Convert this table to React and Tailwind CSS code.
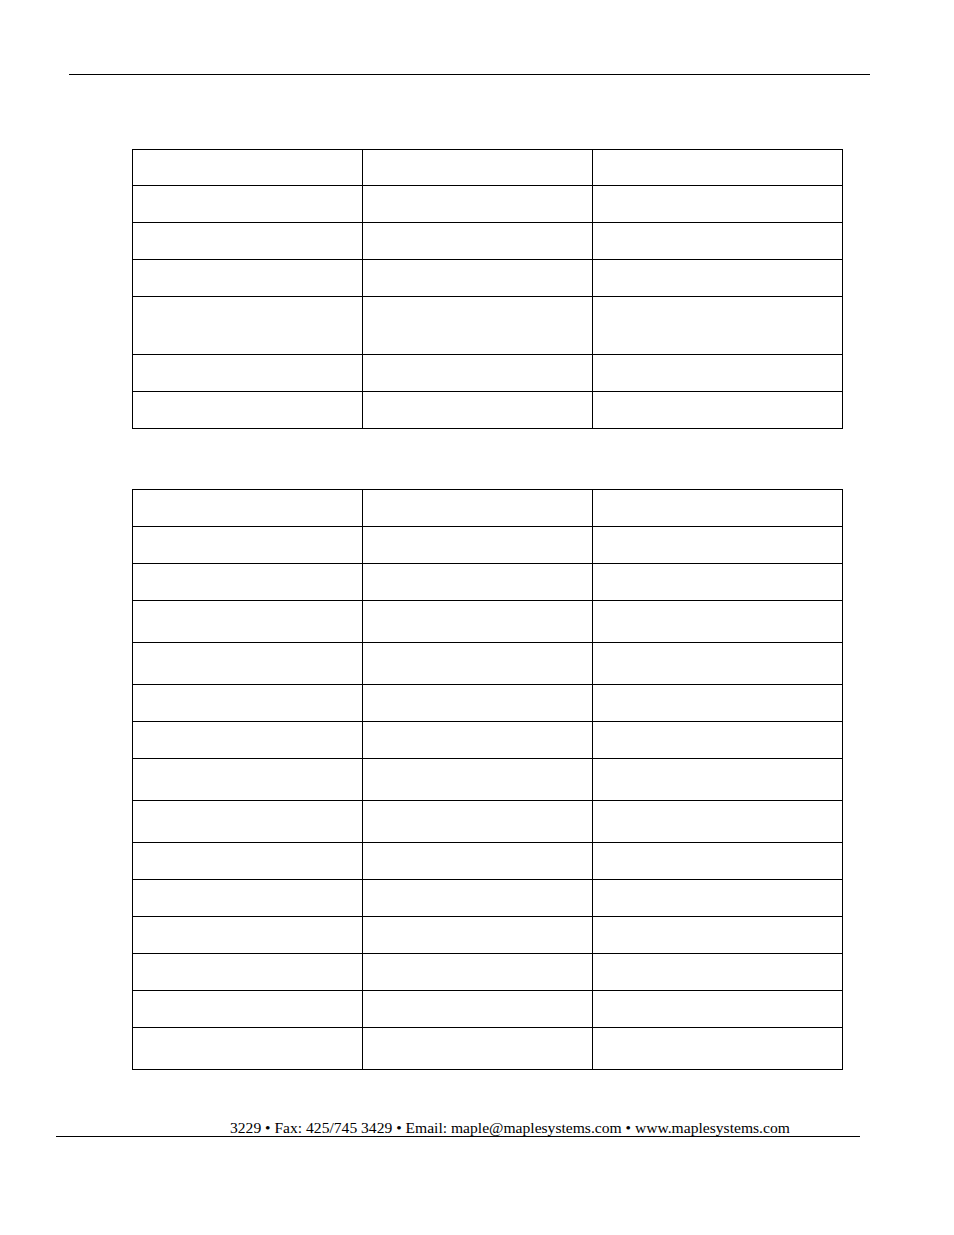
import React from "react";

const tableOne = [36, 37, 37, 37, 58, 37, 37];
const tableTwo = [37, 37, 37, 42, 42, 37, 37, 42, 42, 37, 37, 37, 37, 37, 42];

const BlankTable = ({ rows }) => (
  <div className="ml-[132px] w-[711px] border-l border-t border-black">
    {rows.map((h, i) => (
      <div key={i} className="grid grid-cols-[230px_230px_250px]" style={{ height: h }}>
        <div className="border-r border-b border-black" />
        <div className="border-r border-b border-black" />
        <div className="border-r border-b border-black" />
      </div>
    ))}
  </div>
);

export default function App() {
  return (
    <div className="w-[954px] h-[1235px] bg-white" style={{ fontFamily: '"Liberation Serif", serif' }}>
      <div className="pt-[74px]">
        <div className="ml-[69px] w-[801px] h-px bg-black" />
      </div>
      <div className="mt-[74px]">
        <BlankTable rows={tableOne} />
      </div>
      <div className="mt-[60px]">
        <BlankTable rows={tableTwo} />
      </div>
      <div className="mt-[49px] ml-[230px] text-[15.6px] leading-[17px] text-black whitespace-nowrap">
        3229 • Fax: 425/745 3429 • Email: maple@maplesystems.com • www.maplesystems.com
      </div>
      <div className="ml-[56px] w-[804px] h-px bg-black" />
    </div>
  );
}
